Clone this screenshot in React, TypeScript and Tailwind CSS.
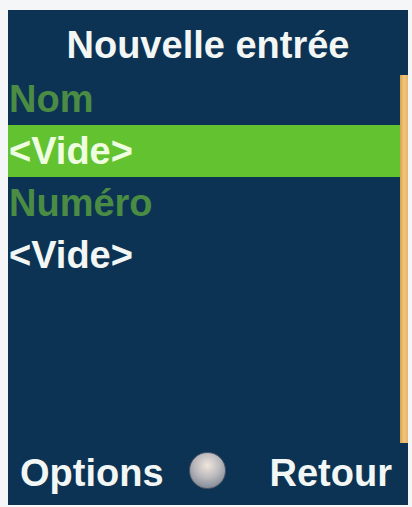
import React from "react";

const font = { fontFamily: '"Liberation Sans", Arial, sans-serif' };

export default function App() {
  return (
    <div className="w-[412px] h-[507px] bg-[#f4f6f8] pt-[10px] pl-[8px]" style={font}>
      <div className="w-[400px] h-[495px] bg-[#0c3353] flex flex-col text-[38px] font-bold leading-[42px]">
        <div className="h-[63px] pt-[7px] flex items-center justify-center text-[#f2f6f4]">
          Nouvelle entrée
        </div>
        <div className="flex h-[370px]">
          <div className="flex-1 flex flex-col">
            <div className="h-[52px] flex items-center pl-[1px] text-[#4a8c44]">Nom</div>
            <div className="h-[52px] flex items-center pl-[1px] bg-[#63c22f] text-[#eefde0]">&lt;Vide&gt;</div>
            <div className="h-[52px] flex items-center pl-[1px] text-[#4a8c44]">Numéro</div>
            <div className="h-[52px] flex items-center pl-[1px] text-[#f2f6f4]">&lt;Vide&gt;</div>
          </div>
          <div className="w-[8px] mt-[2px] bg-gradient-to-r from-[#d9a24e] via-[#f0c77e] to-[#e6b467]" />
        </div>
        <div className="flex-1 flex items-center justify-between pl-[12px] pr-[16px] text-[#f2f6f4] pb-[2px]">
          <span>Options</span>
          <div className="w-[37px] h-[37px] rounded-full border border-[#4f5a6a] bg-[radial-gradient(circle_at_50%_35%,#efe6dc_0%,#b9b8bc_45%,#7d8592_85%,#5d6878_100%)] -mt-[6px] -ml-[18px]" />
          <span>Retour</span>
        </div>
      </div>
    </div>
  );
}
